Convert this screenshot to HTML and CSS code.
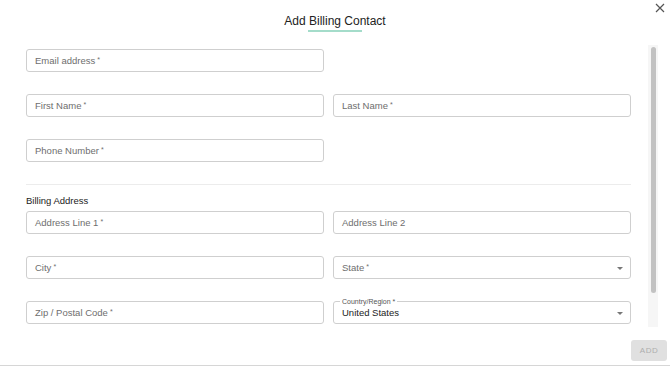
FILE: index.html
```html
<!DOCTYPE html>
<html lang="en">
<head>
    <meta charset="UTF-8">
    <meta name="viewport" content="width=device-width, initial-scale=1.0">
    <title>Add Billing Contact</title>
    <link rel="stylesheet" href="styles.css">
</head>
<body>
    <div class="dialog">
        <div class="header">
            <span class="title">Add Billing Contact</span>
            <button class="close" aria-label="close">
                <svg width="10" height="10" viewBox="0 0 10 10"><path d="M1 1L9 9M9 1L1 9" stroke="#555" stroke-width="1.2" fill="none"/></svg>
            </button>
        </div>
        <div class="scroller">
            <div class="body">
                <div class="row">
                    <div class="field"><span class="ph">Email address<span class="req">*</span></span></div>
                    <div></div>
                </div>
                <div class="row">
                    <div class="field"><span class="ph">First Name<span class="req">*</span></span></div>
                    <div class="field"><span class="ph">Last Name<span class="req">*</span></span></div>
                </div>
                <div class="row">
                    <div class="field"><span class="ph">Phone Number<span class="req">*</span></span></div>
                    <div></div>
                </div>
                <hr class="divider">
                <div class="section">Billing Address</div>
                <div class="row">
                    <div class="field"><span class="ph">Address Line 1<span class="req">*</span></span></div>
                    <div class="field"><span class="ph">Address Line 2</span></div>
                </div>
                <div class="row">
                    <div class="field"><span class="ph">City<span class="req">*</span></span></div>
                    <div class="field select"><span class="ph">State<span class="req">*</span></span><span class="arrow"></span></div>
                </div>
                <div class="row">
                    <div class="field"><span class="ph">Zip / Postal Code<span class="req">*</span></span></div>
                    <div class="field select">
                        <span class="float">Country/Region *</span>
                        <span class="value">United States</span><span class="arrow"></span>
                    </div>
                </div>
            </div>
            <div class="track"><div class="thumb"></div></div>
        </div>
        <div class="footer">
            <button class="btn-add" disabled>ADD</button>
        </div>
    </div>
</body>
</html>
```

FILE: styles.css
```css
body{
    margin: 0;
    padding: 0;
    font-family: "Liberation Sans", Arial, sans-serif;
    background: #fff;
}
.dialog{
    width: 670px;
    height: 365px;
    border-bottom: 1px solid #d6d6d6;
    display: flex;
    flex-direction: column;
}
.header{
    height: 45px;
    display: flex;
    justify-content: center;
    position: relative;
}
.title{
    margin-top: 14px;
    height: 16px;
    font-size: 12px;
    color: #222;
    position: relative;
}
.title::after{
    content: "";
    position: absolute;
    left: 50%;
    margin-left: -27px;
    width: 54px;
    top: 16px;
    height: 2px;
    background: #a4dcca;
}
.close{
    position: absolute;
    right: 5px;
    top: 1px;
    border: 0;
    background: none;
    padding: 0;
    width: 10px;
    height: 10px;
}
.scroller{
    height: 282px;
    display: flex;
    overflow: hidden;
}
.body{
    width: 605px;
    padding: 4px 17px 0 26px;
}
.track{
    width: 10px;
    height: 282px;
    background: #f6f6f6;
    padding-top: 2px;
    box-sizing: border-box;
}
.thumb{
    width: 5px;
    height: 246px;
    margin-left: 3px;
    background: #c2c2c2;
    border-radius: 3px;
}
.row{
    display: grid;
    grid-template-columns: 298px 298px;
    column-gap: 9px;
    margin-bottom: 22px;
}
.field{
    height: 23px;
    box-sizing: border-box;
    border: 1px solid #cfcfcf;
    border-radius: 3px;
    display: flex;
    align-items: center;
    padding: 0 8px;
    position: relative;
    font-size: 9.5px;
}
.ph{
    color: #6e6e6e;
}
.req{
    font-size: 7px;
    vertical-align: 2px;
    margin-left: 2px;
}
.select .arrow{
    position: absolute;
    right: 7px;
    top: 10px;
    border-left: 3px solid transparent;
    border-right: 3px solid transparent;
    border-top: 3px solid #777;
}
.value{
    color: #222;
}
.float{
    position: absolute;
    left: 6px;
    top: -5px;
    font-size: 7px;
    color: #555;
    background: #fff;
    padding: 0 2px;
    line-height: 9px;
}
.divider{
    border: 0;
    border-top: 1px solid #ececec;
    margin: 0 0 10px 0;
    height: 0;
}
.section{
    font-size: 9.5px;
    color: #222;
    height: 12px;
    margin-bottom: 4px;
}
.footer{
    flex: 1;
    display: flex;
    justify-content: flex-end;
    align-items: flex-start;
    padding: 13px 3px 0 0;
}
.btn-add{
    width: 36px;
    height: 21px;
    border: 0;
    border-radius: 3px;
    background: #e0e0e0;
    color: #aeaeae;
    font-family: "Liberation Sans", Arial, sans-serif;
    font-size: 8px;
    letter-spacing: 0.5px;
}
```
